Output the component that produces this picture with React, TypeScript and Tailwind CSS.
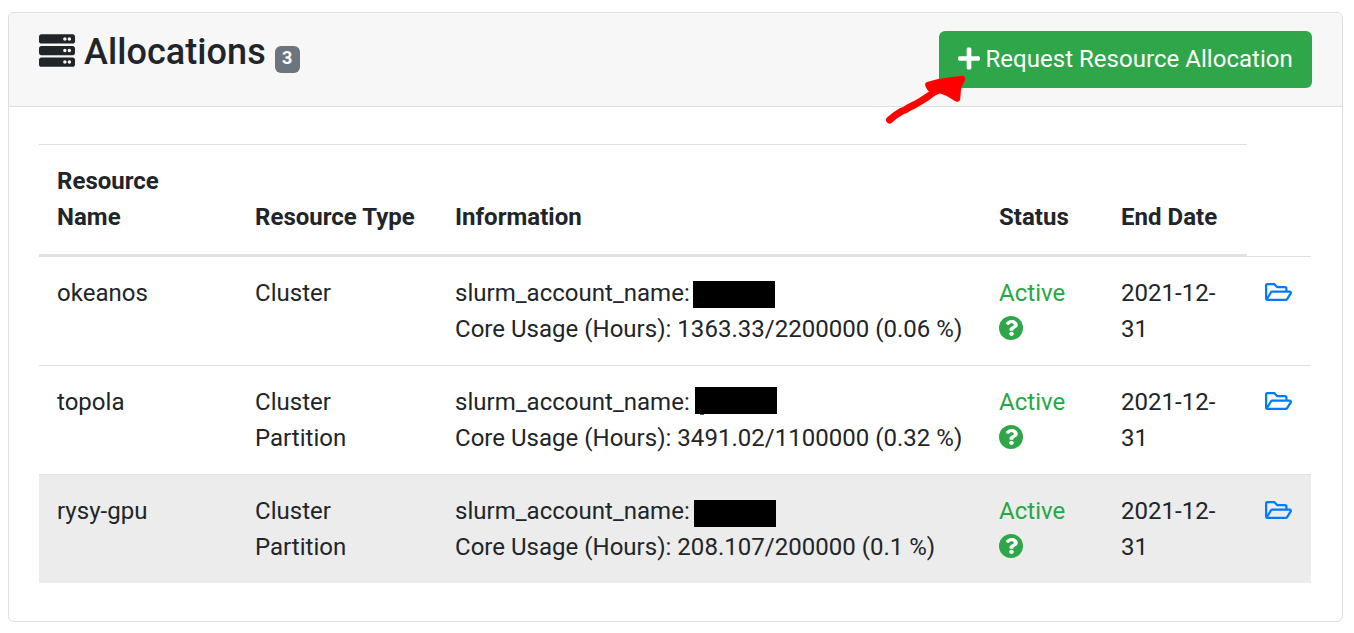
import { FaPlus, FaQuestion, FaRegFolderOpen, FaServer } from 'react-icons/fa';

type Allocation = {
  name: string;
  type: string;
  usage: string;
  maskClass: string;
  descender?: boolean;
  active?: boolean;
};

const columns = 'grid grid-cols-[198px_200px_544px_122px_144px_64px]';

const allocations: Allocation[] = [
  { name: 'okeanos', type: 'Cluster', usage: '1363.33/2200000 (0.06 %)', maskClass: 'left-[256px] top-[24px]' },
  { name: 'topola', type: 'Cluster Partition', usage: '3491.02/1100000 (0.32 %)', maskClass: 'left-[258px] top-[21px]', descender: true },
  { name: 'rysy-gpu', type: 'Cluster Partition', usage: '208.107/200000 (0.1 %)', maskClass: 'left-[257px] top-[25px]', active: true },
];

function AllocationRow({ item }: { item: Allocation }) {
  return (
    <div className={`${columns} h-[109px] border-t border-[#dee2e6] ${item.active ? 'bg-[#ececec]' : ''}`}>
      <div className="px-[18px] pt-[18px]">{item.name}</div>
      <div className="pl-[18px] pr-10 pt-[18px]">{item.type}</div>
      <div className="relative whitespace-nowrap px-[18px] pt-[18px]">
        <div>slurm_account_name:</div>
        <div>Core Usage (Hours): {item.usage}</div>
        <span className={`absolute h-[27px] w-[82px] bg-black ${item.maskClass}`}>
          {item.descender && <span className="absolute left-[5px] top-[27px] h-px w-[4px] bg-[#55595c]" />}
        </span>
      </div>
      <div className="px-[18px] pt-[18px] text-[#28a745]">
        <div>Active</div>
        <div className="flex h-9 items-center pb-[2px]">
          <span className="flex size-6 items-center justify-center rounded-full bg-[#2fa64a] text-white">
            <FaQuestion className="h-4 w-[13px]" preserveAspectRatio="none" />
          </span>
        </div>
      </div>
      <div className="px-[18px] pt-[18px]">
        <div className="whitespace-nowrap">2021-12-</div>
        <div>31</div>
      </div>
      <div className="px-[18px] pt-[18px]">
        <div className="flex h-9 items-center pb-[2px]"><FaRegFolderOpen className="h-6 w-[27px] shrink-0 text-[#007bff]" /></div>
      </div>
    </div>
  );
}

export default function App() {
  return (
    <main className="relative h-[633px] w-[1354px] overflow-hidden bg-white pl-2 pt-3 font-['Roboto',sans-serif] text-[24px] leading-9 tracking-[0.02px] text-[#212529]">
      <section className="h-[610px] w-[1335px] overflow-hidden rounded-md border border-[#dfdfdf]">
        <header className="flex h-[94px] items-start justify-between border-b border-[#dfdfdf] bg-[#f7f7f7] pl-[30px] pr-[30px] pt-[18px]">
          <h3 className="flex h-10 items-center text-[36px] font-medium leading-10">
            <FaServer className="mb-px h-[37px] w-9" preserveAspectRatio="none" />
            <span className="ml-[9px] mt-[2px] tracking-[0.07px]">Allocations</span>
            <span className="ml-[9px] mt-4 flex h-[27px] w-[25px] items-center justify-center rounded-[6px] bg-[#6c757d] pb-[3px] text-[18px] font-bold leading-none text-white">3</span>
          </h3>
          <button className="flex h-[57px] w-[373px] items-center whitespace-nowrap rounded-md bg-[#2fa64a] pb-[2px] pl-[19px] text-white">
            <FaPlus className="h-[25px] w-[22px]" />
            <span className="ml-[5.500px] tracking-[0.03px]">Request Resource Allocation</span>
          </button>
        </header>
        <div className="px-[30px] pt-[37px]">
          <div className="w-[1272px]">
            <div className={`${columns} -mb-px h-[113px] w-[1208px] items-end overflow-hidden border-b-[3px] border-t border-[#dee2e6] pb-[19px] font-bold`}>
              <div className="w-[150px] px-[18px]">Resource Name</div>
              <div className="whitespace-nowrap px-[18px]">Resource Type</div>
              <div className="px-[18px]">Information</div>
              <div className="px-[18px]">Status</div>
              <div className="whitespace-nowrap px-[18px]">End Date</div>
            </div>
            {allocations.map((item) => <AllocationRow key={item.name} item={item} />)}
          </div>
        </div>
      </section>
      <svg className="absolute left-[880px] top-[70px]" width="90" height="60" viewBox="0 0 90 60" fill="none">
        <path d="M9.500 50L15 45.500L22 41L25 40L28 38L35 34.500L41 31L48 26.500L54 22" stroke="#ff0000" strokeWidth="7" strokeLinecap="round" strokeLinejoin="round" />
        <path d="M48.500 15L60 12L82 9L78 17L77 28.500L68 23L60 20L55 22L50 18Z" fill="#ff0000" stroke="#ff0000" strokeWidth="6.500" strokeLinejoin="round" />
      </svg>
    </main>
  );
}
